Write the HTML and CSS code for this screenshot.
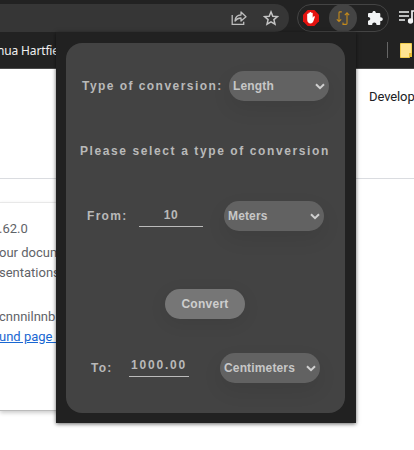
FILE: index.html
```
<!DOCTYPE html>
<html lang="en">
<head>
<meta charset="utf-8">
<title>Unit converter</title>
<link rel="stylesheet" href="styles.css">
</head>
<body>
<header class="browser">
  <div class="toolbar">
    <div class="omnibox">
      <svg width="16" height="16" viewBox="0 0 16 16" fill="none" stroke="#bdbdbd" stroke-width="1.3"><path d="M1.200 5v9.300h11.500v-2.500"/><path d="M4 11c.3-4 2.500-6 6-6V2l5 4.700-5 4.300V8C7.500 8 5.500 9 4 11z" stroke-linejoin="round"/></svg>
      <svg width="16" height="16" viewBox="0 0 16 16" fill="none" stroke="#c4c4c4" stroke-width="1.5"><path d="M8 1.900l1.800 4.300 4.600.4-3.500 3 1.100 4.600L8 11.800l-4 2.400 1.100-4.600-3.500-3 4.600-.4z"/></svg>
    </div>
    <div class="extensions">
      <svg width="16" height="16" viewBox="0 0 16 16"><path d="M4.700 0h6.600L16 4.700v6.600L11.300 16H4.700L0 11.300V4.700z" fill="#e3120f"/><path d="M4.200 7.400V4q.7-.7 1.200 0V3q.8-.8 1.400 0V2.300q.8-.7 1.500 0V3q.8-.6 1.400 0v4.700l1-1.400q1-.4 1.300.3l-1.600 4.600Q9.500 13.500 7.500 13.500 4.200 13.200 4.200 9.500z" fill="#fff"/></svg>
      <span class="active-extension"><svg width="14" height="16" viewBox="0 0 14 16" fill="none" stroke="#c58b1c" stroke-width="1.100"><path d="M5.800 1.900H3.900q-.9 0-.9.900v8.500M.8 9.300L3 11.500l2.200-2.200M7 12.500v1.900h3.100q.9 0 .9-.9V3M8.800 5.100L11 2.900l2.200 2.200"/></svg></span>
      <svg width="16" height="16" viewBox="0 0 16 16"><path d="M1 4q0-1 1-1h3.400C5 .2 9 .2 8.800 3h3.500q1 0 1 1v3.300c3.300-.3 3.300 4 0 3.800V14q0 1-1 1H9.500c.3-3.500-4.600-3.500-4.300 0H2q-1 0-1-1v-3.200c3-.1 3-4 0-3.900z" fill="#f1f3f4"/></svg>
    </div>
    <svg class="media" width="15" height="14" viewBox="0 0 15 14" fill="none" stroke="#f1f3f4" stroke-width="1.700"><path d="M0 2h10M0 6h10M0 10h6M13 11V1h2"/><circle cx="11.500" cy="11" r="1.800" fill="#f1f3f4"/></svg>
  </div>
  <div class="bookmarks">
    <span class="bookmark">nua Hartfiel</span>
    <span class="divider"></span>
    <svg width="12" height="15" viewBox="0 0 12 15"><path d="M.5.500h11v11h-2v3h-9z" fill="#ffe492" stroke="#f1cc4d"/><path d="M9 10h3v4H9z" fill="#e9bd32"/></svg>
  </div>
</header>
<main class="page">
  <div class="page-nav">Develop</div>
  <section class="details">
    <p>.62.0</p>
    <p class="description">our documents<br>sentations</p>
    <p class="identifier">cnnnilnnb</p>
    <p><a>und page in</a></p>
  </section>
</main>
<aside class="popup">
  <form class="converter">
    <div class="row kind">
      <span>Type of conversion:</span>
      <span class="select"><b>Length</b><svg width="10" height="7" viewBox="0 0 10 7"><path d="M1 1.200l4 4 4-4"/></svg></span>
    </div>
    <p class="message">Please select a type of conversion</p>
    <div class="row from">
      <span class="label">From:</span>
      <span class="value">10</span>
      <span class="select"><b>Meters</b><svg width="10" height="7" viewBox="0 0 10 7"><path d="M1 1.200l4 4 4-4"/></svg></span>
    </div>
    <button class="convert" type="button">Convert</button>
    <div class="row to">
      <span class="label">To:</span>
      <span class="value">1000.00</span>
      <span class="select"><b>Centimeters</b><svg width="10" height="7" viewBox="0 0 10 7"><path d="M1 1.200l4 4 4-4"/></svg></span>
    </div>
  </form>
</aside>
</body>
</html>
```
FILE: styles.css
```
* { box-sizing: border-box; }
body { margin: 0; width: 414px; height: 450px; overflow: hidden; position: relative; background: #fff; font-family: Roboto, sans-serif; }
p { margin: 0; }
svg { display: block; flex: none; }
.browser { height: 69px; background: #222; border-bottom: 1px solid #4a4a4a; }
.toolbar { display: flex; height: 36px; padding-top: 4px; }
.omnibox { display: flex; align-items: center; justify-content: flex-end; gap: 16px; width: 289px; height: 28px; padding-right: 10px; background: #363636; border-radius: 0 14px 14px 0; }
.extensions { display: flex; align-items: center; width: 92px; height: 28px; margin-left: 8px; padding-left: 5px; border: 1px solid #444; border-radius: 14px; }
.active-extension { display: grid; place-items: center; width: 28px; height: 28px; margin: 0 10px; background: #444; border-radius: 50%; }
.media { margin: 6px 0 0 10px; }
.bookmarks { display: flex; align-items: center; height: 28px; }
.bookmark { width: 388px; margin-left: -3px; color: #f1f1f1; font: 12px "Noto Sans", sans-serif; letter-spacing: -0.15px; }
.divider { width: 1px; height: 16px; margin: 0 12px 0 2px; background: #666; }
.page { height: 381px; }
.page-nav { height: 110px; padding: 20px 0 0 369px; border-bottom: 1px solid #dadce0; color: #202124; font-size: 13px; line-height: 16px; letter-spacing: -0.1px; }
.details { width: 90px; height: 209px; margin-top: 23px; padding-top: 16px; color: #5f6368; font-size: 13px; line-height: 20px; white-space: nowrap; border-top: 1px solid #e8e8e8; border-bottom: 1px solid #bbb; box-shadow: 0 2px 4px #0003; }
.details p { margin-left: -1px; }
.details .description { margin-top: 4px; }
.details .identifier { margin-top: 24px; }
.details a { color: #1967d2; text-decoration: underline; }
.popup { position: absolute; left: 56px; top: 32px; width: 300px; height: 391px; padding: 11px 11px 10px 10px; background: #212121; box-shadow: 0 1px 4px #0009; }
.converter { display: flex; flex-direction: column; height: 370px; padding-top: 28px; background: #434343; border-radius: 16px; color: #b9b9b9; font: bold 12px/14px "Liberation Sans", sans-serif; letter-spacing: 1.6px; }
.row { display: flex; align-items: center; height: 30px; white-space: nowrap; letter-spacing: 1.45px; }
.select { display: flex; align-items: center; justify-content: space-between; flex: none; width: 100px; height: 30px; padding: 0 4px; border-radius: 15px; background: #626262; box-shadow: 0 8px 20px #00000014; color: #c7c7c7; letter-spacing: 0.15px; }
.select path { fill: none; stroke: #d0d0d0; stroke-width: 2; }
.kind { padding-left: 16px; }
.kind .select { margin-left: auto; margin-right: 16px; }
.message { margin: 43px 0 43px 14px; white-space: nowrap; }
.from { padding-left: 21px; }
.label { flex: none; }
.value { border-bottom: 1px solid #bbb; text-align: center; }
.from .label { width: 52px; letter-spacing: 1.3px; }
.from .value { width: 64px; height: 22px; padding-top: 3px; margin-right: 21px; letter-spacing: 0.5px; }
.convert { align-self: center; width: 80px; height: 30px; margin: 58px 1px 34px 0; padding: 0; border: 0; border-radius: 15px; background: #767676; color: #cecece; font: bold 12px "Liberation Sans", sans-serif; letter-spacing: 0.25px; box-shadow: 0 4px 18px #00000014; }
.to { padding-left: 25px; }
.to .label { width: 38px; letter-spacing: 1.2px; }
.to .value { width: 60px; height: 20px; padding-top: 1px; margin: 0 31px 2px 0; letter-spacing: 1.8px; }
```
